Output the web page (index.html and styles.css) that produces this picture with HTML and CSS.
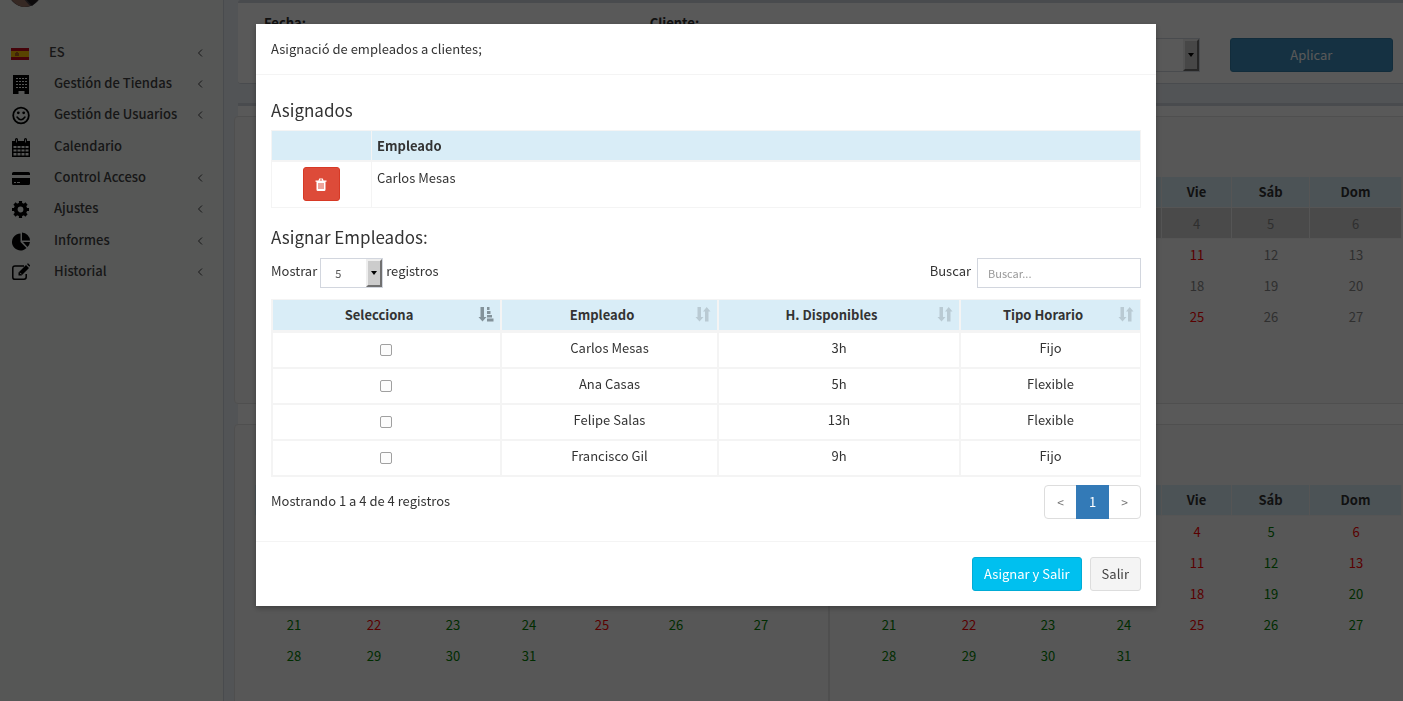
FILE: index.html
```html
<!DOCTYPE html>
<html lang="es">
<head>
<meta charset="utf-8">
<title>Asignación de empleados</title>
<link rel="stylesheet" href="styles.css">
</head>
<body>
<div class="app">
  <nav class="sidebar">
    <svg class="avatar" viewBox="0 0 34 34"><circle cx="17" cy="17" r="17" fill="#4c4448"/><path d="M3 26 L14 24 L22 33 L16 34 Q8 33 3 26Z" fill="#9c7568"/><path d="M18 26 L30 27 L24 33Z" fill="#231f22"/></svg>
    <a class="nav-item nav-lang" href="#">
      <svg class="flag" viewBox="0 0 18 12"><path fill="#c60b1e" d="M0 0h18v12H0z"/><path fill="#ffc400" d="M0 3h18v6H0z"/><path fill="#b5651d" d="M4 5h1v-1h2v1h1v3H4z"/></svg>
      <span>ES</span>
      <svg class="chev" viewBox="0 0 6 8"><path d="M5 .5 1.500 4 5 7.500"/></svg>
    </a>
    <ul class="nav-list">
      <li><a class="nav-item" href="#"><svg class="ico" viewBox="0 0 18 19"><path d="M1 0h16v19h-4.500v-3h-6v3H1z"/><path d="M4 3.500h2m1 0h2m1 0h2m1 0h2M4 6.500h2m1 0h2m1 0h2m1 0h2M4 9.500h2m1 0h2m1 0h2m1 0h2M4 12.500h2m1 0h2m1 0h2m1 0h2" stroke="#f5faf7" stroke-width="1.200"/></svg><span>Gestión de Tiendas</span><svg class="chev" viewBox="0 0 6 8"><path d="M5 .5 1.500 4 5 7.500"/></svg></a></li>
      <li><a class="nav-item" href="#"><svg class="ico" viewBox="0 0 18 19"><circle cx="9" cy="9.500" r="7.800" fill="none" stroke="#000" stroke-width="1.800"/><circle cx="6.300" cy="6.800" r="1.400"/><circle cx="11.700" cy="6.800" r="1.400"/><path d="M5 11q4 5.500 8 0" fill="none" stroke="#000" stroke-width="1.500" stroke-linecap="round"/></svg><span>Gestión de Usuarios</span><svg class="chev" viewBox="0 0 6 8"><path d="M5 .5 1.500 4 5 7.500"/></svg></a></li>
      <li><a class="nav-item" href="#"><svg class="ico" viewBox="0 0 18 19"><path d="M0 3h3V1.500Q3 0 4.500 0T6 1.500V3h6V1.500Q12 0 13.500 0T15 1.500V3h3v16H0z"/><path d="M1.500 8h3v2h-3zm4 0h3v2h-3zm4 0h3v2h-3zm4 0h3v2h-3zM1.500 11.500h3v2h-3zm4 0h3v2h-3zm4 0h3v2h-3zm4 0h3v2h-3zM1.500 15h3v2.500h-3zm4 0h3v2.500h-3zm4 0h3v2.500h-3zm4 0h3v2.500h-3z" fill="#f5faf7"/><path d="M4.500 1.500v3m9-3v3" stroke="#f5faf7" stroke-width=".8"/></svg><span>Calendario</span></a></li>
      <li><a class="nav-item" href="#"><svg class="ico" viewBox="0 0 18 19"><path d="M1.500 3h15Q18 3 18 4.500V6H0V4.500Q0 3 1.500 3zM0 9h18v5.500q0 1.500-1.500 1.500h-15Q0 16 0 14.500z"/><path d="M2 13.500h2m1 0h3" stroke="#f5faf7"/></svg><span>Control Acceso</span><svg class="chev" viewBox="0 0 6 8"><path d="M5 .5 1.500 4 5 7.500"/></svg></a></li>
      <li><a class="nav-item" href="#"><svg class="ico" viewBox="0 0 18 19"><circle cx="8.500" cy="9.500" r="4.800" fill="none" stroke="#000" stroke-width="3.800"/><path d="M8.500 1v3m0 11v3M0 9.500h3m11 0h3M2.500 3.500l2 2m8 8l2 2m0-12l-2 2m-8 8l-2 2" stroke="#000" stroke-width="3.200"/></svg><span>Ajustes</span><svg class="chev" viewBox="0 0 6 8"><path d="M5 .5 1.500 4 5 7.500"/></svg></a></li>
      <li><a class="nav-item" href="#"><svg class="ico" viewBox="0 0 18 19"><path d="M8.500 1.500v8.500l6 6A8.500 8.500 0 1 1 8.500 1.500z"/><path d="M10 .5A8.500 8.500 0 0 1 18 8.500h-8zM11 10h7a8.500 8.500 0 0 1-2.500 5z"/></svg><span>Informes</span><svg class="chev" viewBox="0 0 6 8"><path d="M5 .5 1.500 4 5 7.500"/></svg></a></li>
      <li><a class="nav-item" href="#"><svg class="ico" viewBox="0 0 18 19"><path d="M12 3H3Q.8 3 .8 5.200v9Q.8 16.300 3 16.300h9q2.200 0 2.200-2.200V11" fill="none" stroke="#000" stroke-width="1.500"/><path d="M6.500 9.500 14 2l3 3-7.500 7.500h-3zM15 1l1-.8 2.300 2.300-1 1.200z"/><path d="M8 9.800l1.500 1.500" stroke="#f5faf7"/></svg><span>Historial</span><svg class="chev" viewBox="0 0 6 8"><path d="M5 .5 1.500 4 5 7.500"/></svg></a></li>
    </ul>
  </nav>

  <main class="content">
    <section class="filters">
      <label>Fecha:</label>
      <div class="field">
        <label for="cliente">Cliente:</label>
        <span class="select-wrap"><select id="cliente"><option></option></select><span class="select-btn"></span></span>
      </div>
      <div class="field action"><button class="btn btn-apply" type="button">Aplicar</button></div>
    </section>
    <section class="calendars">
      <div class="strip"></div>
      <div class="cal-row">
        <article class="panel"></article>
        <article class="panel">
          <table class="cal">
            <colgroup><col class="c1"><col class="c2"><col class="c3"><col class="c3"><col class="c5"><col class="c1"><col></colgroup>
            <thead><tr><th></th><th></th><th></th><th></th><th>Vie</th><th>Sáb</th><th>Dom</th></tr></thead>
            <tbody class="past">
              <tr class="week-off"><td></td><td></td><td></td><td></td><td>4</td><td>5</td><td>6</td></tr>
              <tr><td></td><td></td><td></td><td></td><td class="red">11</td><td>12</td><td>13</td></tr>
              <tr><td></td><td></td><td></td><td></td><td>18</td><td>19</td><td>20</td></tr>
              <tr><td></td><td></td><td></td><td></td><td class="red">25</td><td>26</td><td>27</td></tr>
            </tbody>
          </table>
        </article>
      </div>
      <div class="cal-row">
        <article class="panel">
          <table class="cal">
            <colgroup><col class="c1"><col class="c2"><col class="c3"><col class="c3"><col class="c5"><col class="c1"><col></colgroup>
            <thead><tr><th></th><th></th><th></th><th></th><th></th><th></th><th></th></tr></thead>
            <tbody>
              <tr><td></td><td></td><td></td><td></td><td></td><td></td><td></td></tr>
              <tr><td></td><td></td><td></td><td></td><td></td><td></td><td></td></tr>
              <tr><td></td><td></td><td></td><td></td><td></td><td></td><td></td></tr>
              <tr><td>21</td><td class="red">22</td><td>23</td><td>24</td><td class="red">25</td><td>26</td><td>27</td></tr>
              <tr><td>28</td><td>29</td><td>30</td><td>31</td><td></td><td></td><td></td></tr>
            </tbody>
          </table>
        </article>
        <article class="panel">
          <table class="cal">
            <colgroup><col class="c1"><col class="c2"><col class="c3"><col class="c3"><col class="c5"><col class="c1"><col></colgroup>
            <thead><tr><th></th><th></th><th></th><th></th><th>Vie</th><th>Sáb</th><th>Dom</th></tr></thead>
            <tbody>
              <tr><td></td><td></td><td></td><td></td><td class="red">4</td><td>5</td><td class="red">6</td></tr>
              <tr><td></td><td></td><td></td><td></td><td class="red">11</td><td>12</td><td class="red">13</td></tr>
              <tr><td></td><td></td><td></td><td></td><td class="red">18</td><td>19</td><td>20</td></tr>
              <tr><td>21</td><td class="red">22</td><td>23</td><td>24</td><td class="red">25</td><td>26</td><td>27</td></tr>
              <tr><td>28</td><td>29</td><td>30</td><td>31</td><td></td><td></td><td></td></tr>
            </tbody>
          </table>
        </article>
      </div>
    </section>
  </main>
</div>

<div class="backdrop">
  <div class="modal" role="dialog" aria-labelledby="modal-title">
    <header class="modal-header" id="modal-title">Asignació de empleados a clientes;</header>
    <div class="modal-body">
      <h4>Asignados</h4>
      <table class="assigned">
        <thead><tr><th class="col-action"></th><th>Empleado</th></tr></thead>
        <tbody><tr>
          <td class="col-action"><button class="btn btn-danger" type="button" aria-label="Eliminar"><svg viewBox="0 0 12 13"><path d="M.5 2.500h11v1.200h-1V11.500q0 1.500-1.300 1.500H2.800q-1.300 0-1.300-1.500V3.700h-1zM3.500 2.500 4.200.5h3.600l.7 2H7.300l-.4-1H5.100l-.4 1z" fill="#fff"/><path d="M4 5v6m2-6v6m2-6v6" stroke="#dd4b39"/></svg></button></td>
          <td>Carlos Mesas</td>
        </tr></tbody>
      </table>

      <h4>Asignar Empleados:</h4>
      <div class="tools">
        <div class="tool"><label for="len">Mostrar</label><span class="select-wrap small"><select id="len"><option>5</option></select><span class="select-btn"></span></span><span>registros</span></div>
        <div class="tool"><label for="q">Buscar</label><input id="q" class="search" type="text" placeholder="Buscar..."></div>
      </div>

      <table class="staff">
        <colgroup><col class="s1"><col class="s2"><col class="s3"><col></colgroup>
        <thead><tr>
          <th>Selecciona<svg class="sort on" viewBox="0 0 16 16"><path d="M2.500 1h3.500v10h2.500l-4 4.500L.5 11h2zM9 1h2.500v3H9zM9 5h3.500v3H9zM9 9h5v2.500H9zM9 12.500h6.500V15.500H9z"/></svg></th>
          <th>Empleado<svg class="sort" viewBox="0 0 16 16"><path d="M2.500 1h3.500v10h2.500l-4 4.500L.5 11h2zM10 15.500h3.500V5.500h2l-3.800-4.500L8 5.500h2z"/></svg></th>
          <th>H. Disponibles<svg class="sort" viewBox="0 0 16 16"><path d="M2.500 1h3.500v10h2.500l-4 4.500L.5 11h2zM10 15.500h3.500V5.500h2l-3.800-4.500L8 5.500h2z"/></svg></th>
          <th>Tipo Horario<svg class="sort" viewBox="0 0 16 16"><path d="M2.500 1h3.500v10h2.500l-4 4.500L.5 11h2zM10 15.500h3.500V5.500h2l-3.800-4.500L8 5.500h2z"/></svg></th>
        </tr></thead>
        <tbody>
          <tr><td><input type="checkbox" aria-label="Carlos Mesas"></td><td>Carlos Mesas</td><td>3h</td><td>Fijo</td></tr>
          <tr><td><input type="checkbox" aria-label="Ana Casas"></td><td>Ana Casas</td><td>5h</td><td>Flexible</td></tr>
          <tr><td><input type="checkbox" aria-label="Felipe Salas"></td><td>Felipe Salas</td><td>13h</td><td>Flexible</td></tr>
          <tr><td><input type="checkbox" aria-label="Francisco Gil"></td><td>Francisco Gil</td><td>9h</td><td>Fijo</td></tr>
        </tbody>
      </table>

      <div class="table-foot">
        <span>Mostrando 1 a 4 de 4 registros</span>
        <nav class="pager"><a href="#">&lt;</a><a class="current" href="#">1</a><a href="#">&gt;</a></nav>
      </div>
    </div>
    <footer class="modal-footer">
      <button class="btn btn-info" type="button">Asignar y Salir</button>
      <button class="btn btn-default" type="button">Salir</button>
    </footer>
  </div>
</div>
</body>
</html>
```

FILE: styles.css
```css
* { box-sizing: border-box; }

body {
  margin: 0;
  height: 100vh;
  overflow: hidden;
  background: #ecf0f5;
  color: #333;
  font: 13px/20px "Noto Sans CJK SC", "Open Sans", sans-serif;
}

button, input, select { font: inherit; }
table { border-spacing: 0; table-layout: fixed; width: 100%; }
th, td { padding: 0; }

.app { display: flex; height: 100%; }

/* Sidebar */
.sidebar {
  flex: 0 0 224px;
  background: #f5faf7;
  border-right: 1px solid #d2d6de;
}
.avatar { display: block; width: 34px; height: 34px; margin: -27px 0 30px 8px; }
.nav-list { list-style: none; margin: 0; padding: 0; height: 220px; display: grid; grid-auto-rows: 1fr; }
.nav-item {
  display: flex;
  align-items: center;
  height: 100%;
  padding: 0 20px 0 12px;
  color: #444;
  font-weight: 500;
  text-decoration: none;
}
.nav-lang { height: 30px; }
.ico { width: 18px; height: 19px; margin: 3px 24px 0 0; }
.flag { width: 18px; height: 12px; margin: 4px 20px 0 -1px; }
.chev { width: 6px; height: 8px; margin: 2px 0 0 auto; fill: none; stroke: #444; stroke-width: 1; }

/* Page content */
.content { flex: 1; min-width: 0; overflow: hidden; }
.filters {
  display: grid;
  grid-template-columns: 4fr 6fr 2fr;
  height: 84px;
  margin: 0 -15px 19px 14px;
  padding: 10px 10px 0;
  background: #fff;
  border-top: 3px solid #d2d6de;
  border-bottom: 1px solid #d2d6de;
  border-radius: 3px;
}
.filters label { display: block; height: 25px; font-weight: 700; }
.filters > label { padding-left: 16px; }
.field { padding: 0 15px; }
.action { padding-top: 25px; }

.select-wrap {
  display: grid;
  grid-template-columns: 1fr 16px;
  height: 34px;
  background: #fff;
  border: 1px solid #d2d6de;
}
.select-wrap select {
  grid-area: 1 / 1 / 2 / 3;
  appearance: none;
  border: 0;
  background: none;
  padding: 0 14px;
  color: #555;
}
.select-btn {
  grid-area: 1 / 2;
  pointer-events: none;
  display: grid;
  place-items: center;
  background: #ccc;
  border: 2px solid;
  border-color: #eee #707070 #707070 #eee;
}
.select-btn::before { content: ""; border: 3px solid transparent; border-top: 4px solid #000; border-bottom: 0; }

.btn { height: 34px; padding: 0 11px; border: 1px solid; border-radius: 3px; color: #fff; }
.btn-apply { width: 100%; background: #3c8dbc; border-color: #367fa9; }

.calendars {
  margin-left: 14px;
  margin-right: -21px;
  background: #fff;
  border-top: 3px solid #d2d6de;
}
.strip { height: 10px; }
.cal-row {
  display: grid;
  grid-template-columns: 1fr 1fr;
  margin: 0 0 20px -4px;
}
.panel {
  height: 288px;
  padding: 60px 21px 0 20px;
  background: #f8f8f8;
  border: 1px solid #e3e3e3;
  border-radius: 4px;
}
.cal { text-align: center; }
.cal th, .cal td { height: 31px; }
.cal th { background: #d9edf7; border-right: 1px solid #f4f4f4; border-bottom: 1px solid #f4f4f4; }
.cal td { color: #008000; padding-top: 1px; }
.cal .past td { color: #888; }
.cal .week-off td { background: #d3d3d3; border-right: 1px solid #f4f4f4; border-bottom: 1px solid #f4f4f4; }
.cal td.red, .cal .past td.red { color: #f00; }
.c1 { width: 78px; }
.c2 { width: 82px; }
.c3 { width: 76px; }
.c5 { width: 70px; }

/* Modal */
.backdrop {
  position: fixed;
  inset: 0;
  display: flex;
  justify-content: center;
  align-items: flex-start;
  padding: 24px 0 0 9px;
  background: rgba(0, 0, 0, .65);
}
.modal { width: 900px; background: #fff; box-shadow: 0 2px 6px rgba(0, 0, 0, .3); }
.modal-header { padding: 15px; border-bottom: 1px solid #f4f4f4; }
.modal-body { padding: 24px 15px 22px; }
.modal-footer {
  display: flex;
  justify-content: flex-end;
  gap: 8px;
  padding: 15px;
  border-top: 1px solid #f4f4f4;
}
h4 { margin: 0 0 9px; font-size: 17px; line-height: 22px; font-weight: 400; }

.assigned { border: 1px solid #f4f4f4; margin-bottom: 18px; }
.assigned th { height: 31px; text-align: left; background: #d9edf7; border-bottom: 2px solid #f4f4f4; }
.assigned th, .assigned td { padding: 0 5px; }
.assigned td { height: 45px; padding-top: 6px; vertical-align: top; }
.assigned .col-action { width: 100px; text-align: center; border-right: 1px solid #f4f4f4; }
.assigned td.col-action { padding-top: 5px; }
.btn-danger { width: 37px; background: #dd4b39; border-color: #d73925; }
.btn-danger svg { display: block; width: 12px; height: 13px; }

.tools { display: flex; justify-content: space-between; height: 30px; margin: 10px 0 11px; }
.tool { display: flex; gap: 3px; line-height: 26px; }
.tool:last-child { gap: 6px; }
.small { width: 63px; height: 30px; font-size: 11px; }
.search {
  width: 164px;
  height: 30px;
  padding: 0 10px;
  border: 1px solid #d2d6de;
  font-size: 11px;
}
.search::placeholder { color: #999; }

.staff { text-align: center; border: solid #f4f4f4; border-width: 1px 0 0 1px; }
.staff th, .staff td { border: solid #f4f4f4; border-width: 0 1px 2px; }
.staff th { height: 33px; background: #d9edf7; border-bottom-width: 3px; position: relative; padding-right: 15px; }
.staff td { height: 36px; padding: 5px 0 9px; }
.staff td:first-child { padding: 7px 2px 7px 0; }
.s1 { width: 229px; }
.s2 { width: 217px; }
.s3 { width: 242px; }
.sort { position: absolute; right: 6px; top: 6px; width: 16px; height: 16px; fill: #b9cad3; }
.sort.on { fill: #83929a; }
.staff input {
  appearance: none;
  display: block;
  width: 12px;
  height: 12px;
  margin: 0 auto;
  border: 1px solid #a0a0a0;
  border-radius: 2px;
  background: #fcfcfc;
}

.table-foot { display: flex; justify-content: space-between; margin-top: 8px; line-height: 32px; }
.pager { display: flex; border: 1px solid #ddd; border-radius: 4px; }
.pager a { width: 32px; text-align: center; color: #777; text-decoration: none; font-size: 12px; }
.pager a:first-child, .pager a:last-child { width: 31px; }
.pager .current { width: 33px; margin: -1px 0; line-height: 34px; background: #337ab7; color: #fff; font-size: 13px; }
.btn-info { background: #00c0ef; border-color: #00acd6; }
.btn-default { background: #f4f4f4; border-color: #ddd; color: #444; }
```
